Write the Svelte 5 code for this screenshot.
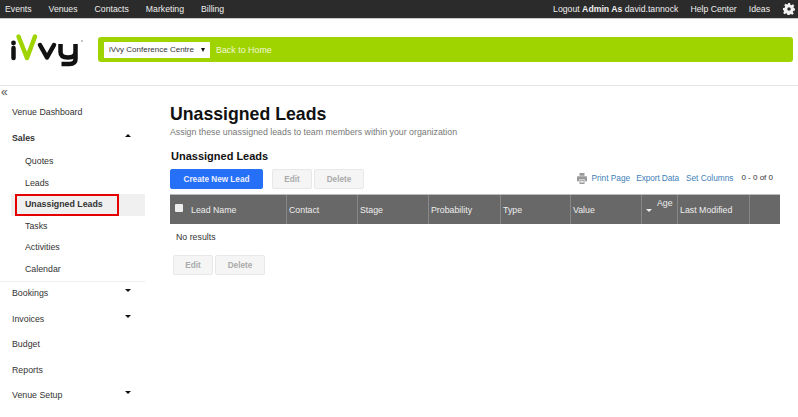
<script>
  const topLeft = ["Events", "Venues", "Contacts", "Marketing", "Billing"];
  const subItems = ["Quotes", "Leads", "Unassigned Leads", "Tasks", "Activities", "Calendar"];
  const lowerItems = [
    { label: "Bookings", caret: true },
    { label: "Invoices", caret: true },
    { label: "Budget" },
    { label: "Reports" },
    { label: "Venue Setup", caret: true }
  ];
  const columns = [
    { label: "Lead Name", width: 117 },
    { label: "Contact", width: 71 },
    { label: "Stage", width: 71 },
    { label: "Probability", width: 72 },
    { label: "Type", width: 70 },
    { label: "Value", width: 71 },
    { label: "Age", width: 36 },
    { label: "Last Modified", width: 72 },
    { label: "", width: 30 }
  ];
</script>

<div class="page">
  <nav class="topbar">
    <div class="links">
      {#each topLeft as item}
        <span>{item}</span>
      {/each}
    </div>
    <div class="links right">
      <span>Logout <b>Admin As</b> david.tannock</span>
      <span>Help Center</span>
      <span>Ideas</span>
      <svg class="gear" width="12" height="12" viewBox="0 0 24 24">
        <path fill="#f2f2f2" fill-rule="evenodd" d="M10 0h4l.7 3.400 2.300 1 2.900-1.900 2.800 2.800-1.900 2.900 1 2.300 2.200.5v4l-3.400.7-1 2.300 1.900 2.900-2.800 2.800-2.900-1.900-2.300 1-.5 2.200h-4l-.7-3.400-2.300-1-2.900 1.900-2.800-2.800 1.900-2.900-1-2.300L0 14v-4l3.400-.7 1-2.300-1.900-2.900 2.800-2.800 2.900 1.900 2.300-1zM12 8.500a3.500 3.500 0 1 0 0 7 3.500 3.500 0 0 0 0-7z" />
      </svg>
    </div>
  </nav>

  <header class="header">
    <svg class="logo" width="74" height="34" viewBox="0 0 74 34">
      <g fill="none" stroke-linejoin="round">
        <path d="M2.500 15v10" stroke="#111" stroke-width="4.500" stroke-linecap="round" />
        <circle cx="2.500" cy="10" r="2.400" fill="#111" />
        <path d="M7.500 3.500l8.500 21.500 8-21.500" stroke="#9fd400" stroke-width="4.500" stroke-linecap="round" />
        <path d="M29 12l7 12.500 7-12.500" stroke="#111" stroke-width="4.500" stroke-linecap="round" />
        <path d="M49.500 11v8q0 5.500 7.500 5.500t7.500-5.500v-8M64.500 19v7q0 5-6 5h-8" stroke="#111" stroke-width="4.500" />
        <circle cx="71" cy="8" r="0.700" fill="#666" />
      </g>
    </svg>
    <div class="greenbar">
      <div class="venue-select">
        <span>iVvy Conference Centre</span>
        <i class="caret"></i>
      </div>
      <span class="home">Back to Home</span>
    </div>
  </header>

  <div class="body">
    <aside class="sidebar">
      <div class="collapse">«</div>
      <div class="item">Venue Dashboard</div>
      <div class="item sales"><b>Sales</b><i class="caret up"></i></div>
      <ul class="sub">
        {#each subItems as item}
          <li class:active={item === "Unassigned Leads"}>
            {#if item === "Unassigned Leads"}
              <span class="marked">{item}</span>
            {:else}
              {item}
            {/if}
          </li>
        {/each}
      </ul>
      <div class="lower">
        {#each lowerItems as item}
          <div class="item">{item.label}{#if item.caret}<i class="caret"></i>{/if}</div>
        {/each}
      </div>
    </aside>

    <main class="content">
      <h1>Unassigned Leads</h1>
      <p class="lead">Assign these unassigned leads to team members within your organization</p>
      <h2>Unassigned Leads</h2>
      <div class="toolbar">
        <button class="primary">Create New Lead</button>
        <button class="ghost edit">Edit</button>
        <button class="ghost">Delete</button>
        <div class="tools">
          <svg width="10" height="11" viewBox="0 0 12 12" preserveAspectRatio="none">
            <path fill="#999" d="M3 0h6v3H3zM1 3.500h10a1 1 0 0 1 1 1V9H9.500V7h-7v2H0V4.500a1 1 0 0 1 1-1zM3 7.800h6V12H3z" />
            <path fill="#fff" d="M3.800 9h4.400v.7H3.800zM3.800 10.300h4.400v.7H3.800z" />
          </svg>
          <a href="#print">Print Page</a>
          <a href="#export" class="gap-small">Export Data</a>
          <a href="#columns" class="gap">Set Columns</a>
          <span class="count">0 - 0 of 0</span>
        </div>
      </div>

      <div class="thead">
        {#each columns as col, i}
          <div class="th" class:age={col.label === "Age"} style="width: {col.width}px">
            {#if i === 0}<i class="check"></i>{/if}
            {#if col.label === "Age"}<i class="sort"></i>{/if}
            <span>{col.label}</span>
          </div>
        {/each}
      </div>
      <p class="empty">No results</p>
      <div class="bottom">
        <button class="ghost edit2">Edit</button>
        <button class="ghost">Delete</button>
      </div>
    </main>
  </div>
</div>

<style>
  :global(body) {
    margin: 0;
    background: #fff;
  }

  .page {
    width: 798px;
    height: 417px;
    overflow: hidden;
    font-family: "Liberation Sans", Arial, sans-serif;
    font-size: 8.8px;
    color: #333;
  }

  .topbar {
    height: 18px;
    background: #2b2b2b;
    border-bottom: 1px solid #c8c8c8;
    display: flex;
    justify-content: space-between;
    align-items: center;
    padding: 0 3px 0 5px;
    color: #eee;
    font-size: 8.7px;
  }

  .links {
    display: flex;
    align-items: center;
    gap: 17px;
  }

  .links.right {
    gap: 12px;
  }

  .gear {
    margin-left: 1px;
  }

  .header {
    height: 66px;
    border-bottom: 1px solid #e6e6e6;
    display: flex;
    padding-left: 11px;
  }

  .logo {
    margin-top: 14px;
    flex: none;
  }

  .greenbar {
    margin: 18px 0 0 13px;
    width: 695px;
    height: 25px;
    background: #9fd400;
    border-radius: 3px;
    display: flex;
    align-items: center;
    box-sizing: border-box;
    padding-left: 6px;
  }

  .venue-select {
    width: 106px;
    height: 16px;
    background: #fff;
    display: flex;
    align-items: center;
    justify-content: space-between;
    box-sizing: border-box;
    padding: 0 5px;
    font-size: 8px;
    white-space: nowrap;
  }

  .venue-select .caret {
    border-left-width: 2.5px;
    border-right-width: 2.5px;
  }

  .home {
    color: #f2f8d8;
    margin-left: 6px;
    font-size: 8.9px;
  }

  .caret {
    display: inline-block;
    width: 0;
    height: 0;
    border-left: 3px solid transparent;
    border-right: 3px solid transparent;
    border-top: 4px solid #111;
  }

  .caret.up {
    border-top: 0;
    border-bottom: 4px solid #111;
  }

  .body {
    display: flex;
  }

  .sidebar {
    width: 145px;
    flex: none;
  }

  .collapse {
    height: 15px;
    line-height: 13px;
    font-size: 12px;
    padding-left: 1px;
    color: #555;
  }

  .item {
    display: flex;
    justify-content: space-between;
    align-items: flex-start;
    height: 25px;
    line-height: 13px;
    padding: 5px 14px 0 12px;
    box-sizing: border-box;
  }

  .item.sales {
    padding-top: 6px;
  }

  .item .caret {
    margin-top: 2px;
    border-top-width: 3px;
  }

  .item .caret.up {
    border-bottom-width: 3px;
  }

  .sub {
    list-style: none;
    margin: 0;
    padding: 0;
  }

  .sub li {
    height: 21.6px;
    line-height: 21px;
    padding-left: 25px;
  }

  .sub li.active {
    background: #f0f0f0;
    font-weight: bold;
    padding-left: 0;
    margin-left: 11px;
  }

  .marked {
    display: block;
    height: 21.6px;
    line-height: 17.6px;
    box-sizing: border-box;
    margin-left: 4px;
    padding-left: 8px;
    width: 104px;
    border: 2px solid #e60000;
    white-space: nowrap;
  }

  .lower {
    border-top: 1px solid #eee;
  }

  .lower .item {
    height: 25.5px;
    padding-top: 5.5px;
  }

  .content {
    flex: 1;
    padding-left: 25px;
    padding-right: 18px;
  }

  h1 {
    margin: 0;
    padding-top: 17px;
    font-size: 17.7px;
    line-height: 23px;
    color: #111;
  }

  .lead {
    margin: 0;
    color: #777;
    line-height: 12px;
    height: 23px;
  }

  h2 {
    margin: 0 0 0 1px;
    font-size: 11px;
    line-height: 14px;
    color: #111;
  }

  .toolbar {
    display: flex;
    align-items: flex-start;
    margin-top: 6px;
    height: 25px;
  }

  button {
    font-family: inherit;
    font-size: 8.2px;
    font-weight: bold;
    height: 20px;
    border-radius: 2px;
    padding: 0;
    box-sizing: border-box;
  }

  .primary {
    width: 93px;
    background: #2670f8;
    border: 1px solid #2670f8;
    color: #eef;
  }

  .ghost {
    width: 50px;
    background: #f5f5f5;
    border: 1px solid #e8e8e8;
    color: #aaa;
    margin-left: 2px;
  }

  .ghost.edit,
  .ghost.edit2 {
    width: 40px;
    margin-left: 9px;
  }

  .ghost.edit2 {
    margin-left: 3px;
  }

  .tools {
    margin-left: auto;
    display: flex;
    align-items: center;
    font-size: 8.3px;
    height: 18px;
    padding-right: 7px;
  }

  .tools svg {
    margin-right: 4px;
  }

  .tools a {
    color: #3f7fb8;
    text-decoration: none;
  }

  .tools .gap {
    margin-left: 7px;
  }

  .tools .gap-small {
    margin-left: 6px;
    letter-spacing: -0.1px;
  }

  .count {
    margin-left: 8px;
    color: #333;
    font-size: 8px;
    position: relative;
    top: -1px;
  }

  .thead {
    display: flex;
    width: 610px;
    height: 30px;
    background: #686868;
    border-top: 1px solid #bbb;
    box-sizing: border-box;
    color: #eee;
  }

  .th {
    flex: none;
    display: flex;
    align-items: center;
    box-sizing: border-box;
    padding-left: 2px;
    border-right: 1px solid #888;
    position: relative;
  }

  .th:last-child {
    border-right: 0;
  }

  .th:first-child {
    padding-left: 5px;
  }

  .check {
    width: 8px;
    height: 8px;
    background: #eee;
    border-radius: 1px;
    margin-right: 8px;
    margin-top: -3px;
  }

  .sort {
    position: absolute;
    left: 4px;
    top: 14px;
    border-left: 3px solid transparent;
    border-right: 3px solid transparent;
    border-top: 3px solid #eee;
  }

  .age span {
    position: absolute;
    left: 15px;
    top: 3px;
  }

  .empty {
    margin: 0;
    padding-left: 6px;
    height: 31px;
    line-height: 27px;
  }

  .bottom {
    display: flex;
  }
</style>
